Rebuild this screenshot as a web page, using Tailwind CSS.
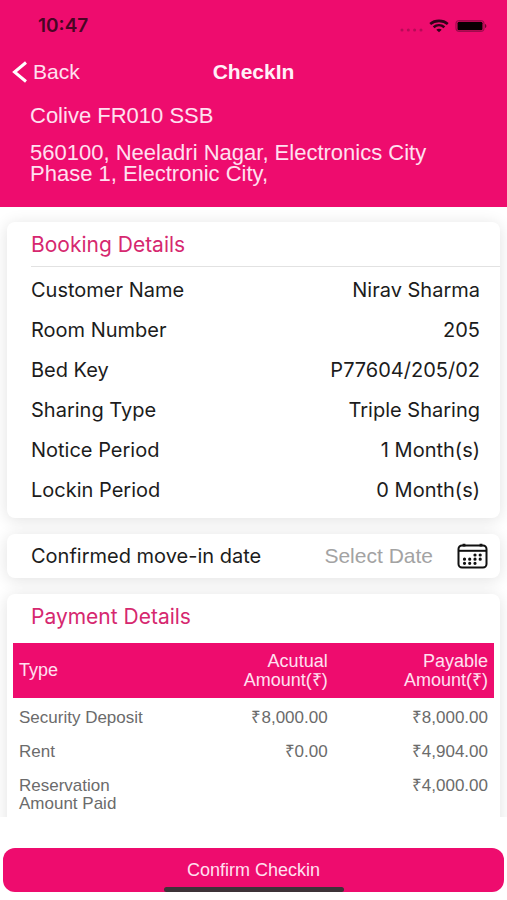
<!DOCTYPE html>
<html lang="en">
<head>
<meta charset="utf-8">
<meta name="viewport" content="width=device-width, initial-scale=1">
<title>CheckIn</title>
<script src="https://cdn.jsdelivr.net/npm/@tailwindcss/browser@4"></script>
</head>
<body class="flex h-screen flex-col overflow-hidden bg-white font-['Inter',sans-serif] text-[#1c1c1c]">
  <header class="shrink-0 bg-[#ee0c6e] pb-[23px] font-['Liberation_Sans',sans-serif] text-[#ffe0f0]">
    <div class="flex h-[52px] items-center justify-between pl-[38px] pr-5 text-[#4a0524]">
      <span class="font-['Inter',sans-serif] text-[19px] font-semibold">10:47</span>
      <div class="flex items-center gap-[6px]">
        <svg class="h-4 w-[23px]" viewBox="0 0 23 16" fill="#b80a58" aria-hidden="true"><circle cx="2" cy="12" r="1.500"/><circle cx="8.300" cy="12" r="1.500"/><circle cx="14.600" cy="12" r="1.500"/><circle cx="21" cy="12" r="1.500"/></svg>
        <svg class="h-[14px] w-5" viewBox="0 0 20 14" fill="none" stroke="#30031a" stroke-width="2.600" aria-hidden="true"><path d="M1.200 5C6 .8 14 .8 18.800 5"/><path d="M4.600 8.300C7.800 5.600 12.200 5.600 15.400 8.300"/><path d="M10 13.200L7.300 10.800C8.800 9.500 11.200 9.500 12.700 10.800Z" fill="#30031a" stroke="none"/></svg>
        <svg class="h-[14px] w-8" viewBox="0 0 32 14" aria-hidden="true"><rect x="1" y="1.500" width="28" height="11" rx="3.500" fill="none" stroke="#a00a4d" stroke-width="1.200"/><rect x="2.500" y="2.800" width="25" height="8.400" rx="1.500" fill="#080003"/><path d="M30 5C31.800 5.500 31.800 8.500 30 9Z" fill="#70062f"/></svg>
      </div>
    </div>
    <div class="grid h-[40px] grid-cols-[1fr_auto_1fr] items-center pl-3">
      <button type="button" class="flex items-center gap-[6px] text-[21px]">
        <svg class="h-[22px] w-[15px]" viewBox="0 0 15 22" fill="none" stroke="#fff" stroke-width="3" aria-hidden="true"><path d="M14 1.500L2.500 11L14 20.500"/></svg>
        Back
      </button>
      <h1 class="pr-3 text-[21px] font-bold text-[#fff0f8]">CheckIn</h1>
    </div>
    <div class="pl-[30px] pr-[60px] pt-[13px] text-[22px] leading-[21px]">
      <p>Colive FR010 SSB</p>
      <p class="mt-4">560100, Neeladri Nagar, Electronics City Phase 1, Electronic City,</p>
    </div>
  </header>

  <main class="min-h-0 flex-1 overflow-hidden px-[7px] pt-[15px]">
    <section class="rounded-lg bg-white pb-[8px] pl-6 shadow-[0_2px_16px_rgba(0,0,0,0.12)]">
      <h2 class="flex h-[45px] items-center border-b border-[#e2e2e2] pt-[2px] text-[21px] text-[#d6286f]">Booking Details</h2>
      <dl class="pr-5 pt-[3px] text-[20px] leading-10">
        <div class="flex justify-between"><dt>Customer Name</dt><dd>Nirav Sharma</dd></div>
        <div class="flex justify-between"><dt>Room Number</dt><dd>205</dd></div>
        <div class="flex justify-between"><dt>Bed Key</dt><dd>P77604/205/02</dd></div>
        <div class="flex justify-between"><dt>Sharing Type</dt><dd>Triple Sharing</dd></div>
        <div class="flex justify-between"><dt>Notice Period</dt><dd>1 Month(s)</dd></div>
        <div class="flex justify-between"><dt>Lockin Period</dt><dd>0 Month(s)</dd></div>
      </dl>
    </section>

    <section class="mt-4 flex h-[44px] items-center rounded-lg bg-white pl-6 pr-3 shadow-[0_2px_16px_rgba(0,0,0,0.12)]">
      <label for="move-in" class="text-[20px] whitespace-nowrap">Confirmed move-in date</label>
      <input id="move-in" type="text" placeholder="Select Date" class="min-w-0 flex-1 bg-transparent text-right font-['Liberation_Sans',sans-serif] text-[21px] outline-none placeholder:text-[#a3a3a3]">
      <button type="button" aria-label="Open calendar" class="ml-6 shrink-0">
        <svg class="h-[26px] w-[31px]" viewBox="0 0 31 26" fill="none" stroke="#111" stroke-width="2" aria-hidden="true"><rect x="1.500" y="2.500" width="28" height="22" rx="3.500"/><path d="M1.500 7.800H29.500"/><path d="M7 .8V3.500M24 .8V3.500" stroke-width="2.800"/><g stroke-width="3.200" stroke-linecap="round"><path d="M18 12h.01M23.200 12h.01M7.500 16.200h.01M12.700 16.200h.01M18 16.200h.01M23.200 16.200h.01M7.500 20.300h.01M12.700 20.300h.01M18 20.300h.01"/></g></svg>
      </button>
    </section>

    <section class="mt-4 rounded-lg bg-white px-[6px] pb-4 shadow-[0_2px_16px_rgba(0,0,0,0.12)]">
      <h2 class="flex h-[49px] items-center pb-[4px] pl-[18px] text-[21px] text-[#d6286f]">Payment Details</h2>
      <table class="w-full table-fixed font-['Liberation_Sans',sans-serif] text-[17px] leading-[18px] text-[#6b6b6b]">
        <thead class="bg-[#ee0c6e] text-[18px] leading-[19px] text-[#ffe0f0]">
          <tr class="h-[55px]">
            <th class="w-1/3 pl-[6px] text-left font-normal">Type</th>
            <th class="w-1/3 pr-[6px] text-right font-normal">Acutual<br>Amount(₹)</th>
            <th class="w-1/3 pr-[6px] text-right font-normal">Payable<br>Amount(₹)</th>
          </tr>
        </thead>
        <tbody class="align-top">
          <tr><td class="pb-2 pl-[6px] pt-[11px]">Security Deposit</td><td class="pb-2 pr-[6px] pt-[11px] text-right">₹8,000.00</td><td class="pb-2 pr-[6px] pt-[11px] text-right">₹8,000.00</td></tr>
          <tr><td class="py-2 pl-[6px]">Rent</td><td class="py-2 pr-[6px] text-right">₹0.00</td><td class="py-2 pr-[6px] text-right">₹4,904.00</td></tr>
          <tr><td class="py-2 pl-[6px]">Reservation<br>Amount Paid</td><td></td><td class="py-2 pr-[6px] text-right">₹4,000.00</td></tr>
        </tbody>
      </table>
    </section>
  </main>

  <footer class="relative shrink-0 bg-white px-[3px] pb-2 pt-[31px]">
    <button type="button" class="h-[44px] w-full rounded-xl bg-[#ee0c6e] font-['Liberation_Sans',sans-serif] text-[18px] text-[#ffe0f0]">Confirm Checkin</button>
    <div class="absolute bottom-2 left-1/2 h-[5px] w-[180px] -translate-x-1/2 rounded-full bg-[#3d3338]"></div>
  </footer>
</body>
</html>
